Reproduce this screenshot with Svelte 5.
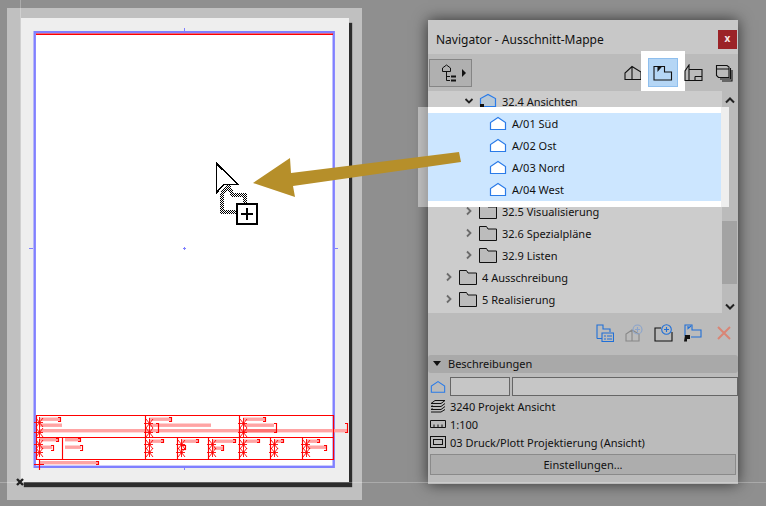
<script lang="ts">
	// tree rows of the navigator, top to bottom
	const rows = [
		{ depth: 2, open: true, icon: 'view', label: '32.4 Ansichten' },
		{ depth: 3, icon: 'house', label: 'A/01 Süd' },
		{ depth: 3, icon: 'house', label: 'A/02 Ost' },
		{ depth: 3, icon: 'house', label: 'A/03 Nord' },
		{ depth: 3, icon: 'house', label: 'A/04 West' },
		{ depth: 2, icon: 'folder', label: '32.5 Visualisierung' },
		{ depth: 2, icon: 'folder', label: '32.6 Spezialpläne' },
		{ depth: 2, icon: 'folder', label: '32.9 Listen' },
		{ depth: 1, icon: 'folder', label: '4 Ausschreibung' },
		{ depth: 1, icon: 'folder', label: '5 Realisierung' }
	];

	// title block, in page pixels
	const hLines = [415.5, 437.5, 459.5];
	const vLines = [
		[145.5, 415, 460],
		[239.5, 415, 460],
		[62.5, 437, 460],
		[177.5, 437, 460],
		[208.5, 437, 460],
		[270.5, 437, 460],
		[302.5, 437, 460]
	];
	const bars = [
		[39, 417.5, 21],
		[39, 423.5, 23],
		[39, 429, 308],
		[149, 417.5, 22],
		[149, 423.5, 62],
		[243, 417.5, 22],
		[243, 423.5, 31],
		[39, 438, 19],
		[39, 445.5, 13],
		[65, 438, 15],
		[65, 445.5, 16],
		[149, 439.5, 14],
		[181, 439.5, 17],
		[212, 439.5, 23],
		[212, 446.5, 11],
		[243, 439.5, 16],
		[274, 439.5, 9],
		[306, 439.5, 13],
		[306, 445.5, 20],
		[39, 461, 59]
	];
	const brackets = [
		[60, 417, 5],
		[171, 417, 5],
		[265, 417, 5],
		[158, 423, 10],
		[276, 423, 10],
		[347, 423, 10],
		[58, 438, 4],
		[53, 445, 6],
		[80, 438, 4],
		[82, 445, 6],
		[163, 439, 4],
		[198, 439, 4],
		[235, 439, 4],
		[223, 445, 6],
		[259, 439, 4],
		[283, 439, 4],
		[319, 439, 4],
		[326, 445, 6],
		[98, 461, 4]
	];
	const marks = [
		[39, 422],
		[39, 432],
		[149, 423],
		[149, 432],
		[243, 423],
		[243, 432],
		[39, 444],
		[39, 452],
		[149, 444],
		[149, 452],
		[181, 444],
		[181, 452],
		[212, 444],
		[212, 452],
		[243, 444],
		[243, 452],
		[274, 444],
		[274, 452],
		[306, 444],
		[306, 452]
	];
</script>

{#snippet house(cls = '')}
	<svg class="ico {cls}" width="18" height="15" viewBox="0 0 18 15">
		<path d="M1.5 13.5V6.5L9 1.5L16.5 6.5V13.5Z" fill="#fff" stroke="#2a7be8" stroke-width="1.2" />
	</svg>
{/snippet}

{#snippet folder()}
	<svg class="ico" width="18" height="16" viewBox="0 0 18 16">
		<path d="M.5 15.5V1.5H7.5L9 4H17.5V15.5Z" fill="#bcbcbc" stroke="#111" />
	</svg>
{/snippet}

{#snippet view()}
	<svg class="ico" width="18" height="16" viewBox="0 0 18 16">
		<path d="M1.5 13.5V5.5L9 1.5L16.5 5.5V13.5H5" fill="#b8c8d6" stroke="#2a7be8" stroke-width="1.2" />
		<path d="M1 11H5V14H3.5V16H1Z" fill="#111" />
	</svg>
{/snippet}

<div class="desktop">
	<div class="sheet">
		<div class="page">
			<svg class="drawing" width="328" height="464" viewBox="21 18 328 464">
				<rect x="34.7" y="32.2" width="299" height="434.6" fill="#fff" stroke="#8080ff" stroke-width="2.4" />
				<path d="M184.5 28V31M184.5 467V470M29 248.5H33M335 248.5H338" stroke="#8080ff" />
				<path d="M183 248.5H186M184.5 247V250" stroke="#8080ff" />
				<path d="M36 34.2H333" stroke="#f00" stroke-width="1.6" />
				{#each bars as [x, y, w]}
					<rect {x} {y} width={w} height="3.4" fill="#ffa4a4" />
				{/each}
				<rect x="243" y="429" width="33" height="3.4" fill="#ff7272" />
				<g stroke="#f00" fill="none" stroke-width="1.15">
					{#each hLines as y}
						<path d="M36 {y}H333.5" />
					{/each}
					<path d="M36.5 415V460M333.5 415V460" />
					{#each vLines as [x, a, b]}
						<path d="M{x} {a}V{b}" />
					{/each}
					{#each brackets as [x, y, h]}
						<path d="M{x - 2} {y + 0.5}H{x + 0.5}V{y + h - 0.5}H{x - 2}" />
					{/each}
					{#each marks as [x, y]}
						<path class="mark" d="M{x - 5} {y + 0.5}H{x + 4}M{x + 0.5} {y - 5}V{y + 5}M{x - 3} {y - 4}L{x + 4} {y + 5}M{x + 4} {y - 4}L{x - 3} {y + 5}" />
					{/each}
					<path d="M39.5 460V470M34 464.5H44" />
					<rect x="181.5" y="445.5" width="4" height="4" />
				</g>
			</svg>
		</div>
	</div>

	<section class="panel">
		<header class="title">
			<span>Navigator - Ausschnitt-Mappe</span>
			<button class="close">x</button>
		</header>

		<div class="toolbar">
			<button class="popup">
				<svg width="16" height="18" viewBox="0 0 16 18" fill="none" stroke="#111">
					<path d="M1.5 7.5V4L5.5 1L9.5 4V7.5Z" />
					<path d="M5.5 8V16.5H9M5.5 12.5H9" />
					<path d="M10 12.5H15M10 16.5H15" stroke-width="2" />
				</svg>
				<span class="tri"></span>
			</button>
			<div class="modes">
				<svg width="18" height="16" viewBox="0 0 18 16" fill="none" stroke="#111" stroke-width="1.1">
					<path d="M1 14.5V8L8 1.5L17 7V14.5ZM8 1.5V14.5" />
				</svg>
				<span class="mode active">
					<svg width="20" height="16" viewBox="0 0 20 16" fill="none" stroke="#111" stroke-width="1.1">
						<path d="M1 15V1.5H11.5V7H18.5V15Z" />
						<path d="M5 1.5V5.5L8.5 1.5" fill="#111" />
					</svg>
				</span>
				<svg width="19" height="18" viewBox="0 0 19 18" fill="none" stroke="#111" stroke-width="1.1">
					<path d="M1 16.5V7L5 1V5.5H18V16.5ZM5 5.5V16.5M11 12.5H18M11 12.5V16.5" />
				</svg>
				<svg width="18" height="18" viewBox="0 0 18 18" fill="none" stroke="#111" stroke-width="1.1">
					<path d="M1.5 1.5H12L14 3V13.5H3.5L1.5 11.5ZM1.5 5H14" />
					<path d="M15.5 4V15H5M17 6V17H7" />
				</svg>
			</div>
		</div>

		<div class="body">
			<ul class="tree">
				{#each rows as row}
					<li class="row depth-{row.depth}" class:selected={row.depth === 3}>
						{#if row.depth < 3}
							<svg class="chev" class:open={row.open} width="10" height="10" viewBox="0 0 10 10">
								<path d="M3 1.5L6.5 5L3 8.5" fill="none" stroke="currentColor" stroke-width="1.8" />
							</svg>
						{/if}
						{#if row.icon === 'folder'}
							{@render folder()}
						{:else if row.icon === 'view'}
							{@render view()}
						{:else}
							{@render house()}
						{/if}
						<span>{row.label}</span>
					</li>
				{/each}
			</ul>
			<div class="scrollbar">
				<svg width="12" height="8" viewBox="0 0 12 8"><path d="M2 6.5L6 2.5L10 6.5" fill="none" stroke="#222" stroke-width="2" /></svg>
				<div class="track"><div class="thumb"></div></div>
				<svg width="12" height="8" viewBox="0 0 12 8"><path d="M2 1.5L6 5.5L10 1.5" fill="none" stroke="#222" stroke-width="2" /></svg>
			</div>
		</div>

		<div class="actions">
			<svg width="18" height="18" viewBox="0 0 18 18" fill="none" stroke="#1f6fd8" stroke-width="1.1">
				<path d="M1 14.5V1H7V5H14V8M1 14.5H6M6 9H17.5V17.5H6Z" />
				<path d="M8 12H10M11 12H16M8 15H10M11 15H16" />
			</svg>
			<svg width="18" height="18" viewBox="0 0 18 18" fill="none" stroke="#888" stroke-width="1.1">
				<path d="M1 17V10L7 6L14 10V17ZM7 6V17" />
				<circle cx="12.5" cy="5.5" r="4.5" stroke="#8aa4cc" />
				<path d="M12.5 3V8M10 5.5H15" stroke="#8aa4cc" />
			</svg>
			<svg width="19" height="18" viewBox="0 0 19 18" fill="none" stroke="#111" stroke-width="1.1">
				<path d="M7 4H1V17H18V8" />
				<circle cx="12.5" cy="5.5" r="4.8" stroke="#1f6fd8" />
				<path d="M12.5 3V8M10 5.5H15" stroke="#1f6fd8" />
			</svg>
			<svg width="18" height="18" viewBox="0 0 18 18" fill="none" stroke="#1f6fd8" stroke-width="1.1">
				<path d="M1 12V1H8V6H17V13H7" />
				<path d="M4 2V4.5L7 2" />
				<path d="M1 11H6V15H3V17.5H0Z" fill="#111" stroke="none" />
			</svg>
			<svg class="del" width="14" height="14" viewBox="0 0 14 14"><path d="M1 1L13 13M13 1L1 13" stroke="#d98575" stroke-width="2" /></svg>
		</div>

		<div class="group">
			<svg width="8" height="5" viewBox="0 0 8 5"><path d="M0 0H8L4 5Z" fill="#111" /></svg>
			<span>Beschreibungen</span>
		</div>

		<div class="fields">
			{@render house('small')}
			<span class="field short"></span>
			<span class="field long"></span>
		</div>

		<div class="info">
			<svg width="16" height="14" viewBox="0 0 16 14" fill="none" stroke="#111">
				<path d="M1 4.5L5 1.5H15L11 4.5ZM1 7.5L2.5 6.5M1 7.5H11L15 4.5M1 10.5L2.5 9.5M1 10.5H11L15 7.5M1 13H11L15 10.5" />
			</svg>
			<span>3240 Projekt Ansicht</span>
		</div>
		<div class="info">
			<svg width="16" height="14" viewBox="0 0 16 14" fill="none" stroke="#111">
				<path d="M.5 3.5H15.5V10.5H.5ZM4 10V7.5M8 10V7.5M12 10V7.5" />
			</svg>
			<span>1:100</span>
		</div>
		<div class="info">
			<svg width="16" height="14" viewBox="0 0 16 14" fill="none" stroke="#111">
				<rect x=".5" y="1.5" width="15" height="11" />
				<rect x="3.5" y="4.5" width="9" height="5" />
			</svg>
			<span>03 Druck/Plott Projektierung (Ansicht)</span>
		</div>

		<button class="settings">Einstellungen...</button>
	</section>

	<!-- annotations laid over the screenshot -->
	<svg class="overlay" width="766" height="506" viewBox="0 0 766 506">
		<defs>
			<pattern id="dither" width="2" height="2" patternUnits="userSpaceOnUse">
				<rect width="1" height="1" fill="#000" />
				<rect x="1" y="1" width="1" height="1" fill="#000" />
				<rect x="1" width="1" height="1" fill="#fff" />
				<rect y="1" width="1" height="1" fill="#fff" />
			</pattern>
		</defs>

		<path d="M20.5 0V482M0 482.5H766" stroke="#fff" stroke-opacity=".25" />
		<path d="M17 479L23 485M23 479L17 485" stroke="#222" stroke-width="2.4" />

		<rect x="418" y="107" width="10" height="100" fill="#fff" fill-opacity=".42" />
		<rect x="428" y="107" width="294" height="6" fill="#fff" />
		<rect x="428" y="201" width="294" height="6" fill="#fff" />
		<rect x="721" y="107" width="8" height="100" fill="#eee" />

		<path d="M253 183L290 158L291 173L459 152L461 162L293 186L295 197Z" fill="#b68f2a" />

		<g shape-rendering="crispEdges">
			<path d="M222 193V211.5H236M222 193L228 186L233 195H245V203" fill="none" stroke="url(#dither)" stroke-width="4" />
			<path d="M216.5 163.5V192.5L224 184.5H238Z" fill="#fff" stroke="#000" stroke-width="1.6" />
			<rect x="237" y="204" width="20" height="20" fill="#fff" stroke="#000" stroke-width="2" />
			<path d="M241 214H253M247 208V220" stroke="#000" stroke-width="2" />
		</g>
	</svg>
</div>

<style>
	:global(body) {
		margin: 0;
	}

	.desktop {
		position: relative;
		width: 766px;
		height: 506px;
		overflow: hidden;
		background: #8f8f8f;
		font-family: 'Noto Sans', 'Open Sans', sans-serif;
		font-size: 11px;
		color: #111;
	}

	.sheet {
		position: absolute;
		left: 7px;
		top: 8px;
		width: 355px;
		height: 492px;
		padding: 10px 13px 18px 14px;
		box-sizing: border-box;
		background: #c0c0c0;
	}

	.page {
		width: 328px;
		height: 464px;
		background: #eee;
		box-shadow: 3px 5px 1px #2c2c2c;
	}

	.drawing {
		display: block;
		overflow: visible;
	}

	.mark {
		stroke-width: 0.9;
	}

	.panel {
		position: absolute;
		left: 428px;
		top: 20px;
		width: 310px;
		height: 464px;
		background: #bbb;
		box-shadow: 0 0 14px rgba(0, 0, 0, 0.65);
	}

	.title {
		height: 34px;
		padding: 5px 1px 0 8px;
		box-sizing: border-box;
		display: flex;
		align-items: center;
		justify-content: space-between;
		background: #c8c8c8;
		font-size: 12px;
	}

	.close {
		width: 19px;
		height: 19px;
		padding: 0 0 3px;
		border: 0;
		background: #9b2327;
		color: #f5e5e5;
		font: 700 10px 'Noto Sans', sans-serif;
	}

	.toolbar {
		height: 37px;
		padding: 0 5px 0 1px;
		box-sizing: border-box;
		display: flex;
		align-items: center;
		justify-content: space-between;
	}

	.popup {
		width: 43px;
		height: 28px;
		padding: 0 0 0 11px;
		display: flex;
		align-items: center;
		gap: 5px;
		border: 1px solid #858585;
		background: #b0b0b0;
	}

	.tri {
		border-left: 4px solid #111;
		border-top: 4px solid transparent;
		border-bottom: 4px solid transparent;
	}

	.modes {
		display: flex;
		align-items: center;
		gap: 6px;
	}

	.modes > svg:last-child {
		margin-left: 6px;
	}

	.mode {
		width: 30px;
		height: 29px;
		display: flex;
		align-items: center;
		justify-content: center;
		box-sizing: border-box;
		border: 1px solid #8fbfee;
		background: #b5d6f5;
		box-shadow: 0 0 0 7px #fff;
	}

	.body {
		height: 222px;
		display: flex;
	}

	.tree {
		width: 294px;
		margin: 0;
		padding: 0;
		list-style: none;
		background: #ccc;
	}

	.row {
		height: 22px;
		padding-bottom: 2px;
		box-sizing: border-box;
		display: flex;
		align-items: center;
		white-space: nowrap;
		font-size: 11px;
	}

	.depth-1 {
		padding-left: 16px;
	}

	.depth-2 {
		padding-left: 36px;
	}

	.depth-3 {
		padding-left: 61px;
	}

	.selected {
		width: 293px;
		background: #cce6ff;
	}

	.chev {
		color: #6b6b6b;
		margin-right: 5px;
	}

	.chev.open {
		color: #222;
		transform: rotate(90deg);
	}

	.ico {
		flex: none;
		margin-right: 5px;
	}

	.small path {
		fill: none;
	}

	.scrollbar {
		flex: 1;
		padding: 5px 0 2px;
		box-sizing: border-box;
		display: flex;
		flex-direction: column;
		align-items: center;
		gap: 4px;
	}

	.track {
		flex: 1;
		align-self: stretch;
		padding-top: 113px;
		box-sizing: border-box;
	}

	.thumb {
		width: 15px;
		height: 63px;
		background: #a3a3a3;
	}

	.actions {
		height: 37px;
		padding: 2px 7px 0 0;
		box-sizing: border-box;
		display: flex;
		align-items: center;
		justify-content: flex-end;
		gap: 11px;
	}

	.del {
		margin-left: 4px;
	}

	.group {
		height: 18px;
		margin-top: 5px;
		padding: 0 0 1px 5px;
		box-sizing: border-box;
		display: flex;
		align-items: center;
		gap: 7px;
		border-radius: 3px;
		background: #a9a9a9;
	}

	.fields {
		height: 19px;
		margin-top: 4px;
		padding-left: 2px;
		display: flex;
		align-items: center;
		gap: 2px;
	}

	.fields .ico {
		width: 16px;
		height: 14px;
		margin-right: 2px;
	}

	.field {
		height: 19px;
		box-sizing: border-box;
		border: 1px solid #666;
		background: #c6c6c6;
	}

	.short {
		width: 60px;
	}

	.long {
		width: 226px;
	}

	.info {
		height: 18px;
		padding-left: 2px;
		display: flex;
		align-items: center;
		gap: 4px;
	}

	.fields + .info {
		margin-top: 1px;
	}

	.settings {
		display: block;
		width: 306px;
		height: 21px;
		margin: 3px 0 0 2px;
		padding: 0;
		border: 1px solid #8a8a8a;
		background: #adadad;
		font: 11px 'Noto Sans', sans-serif;
		color: #111;
	}

	.overlay {
		position: absolute;
		left: 0;
		top: 0;
		pointer-events: none;
	}
</style>
